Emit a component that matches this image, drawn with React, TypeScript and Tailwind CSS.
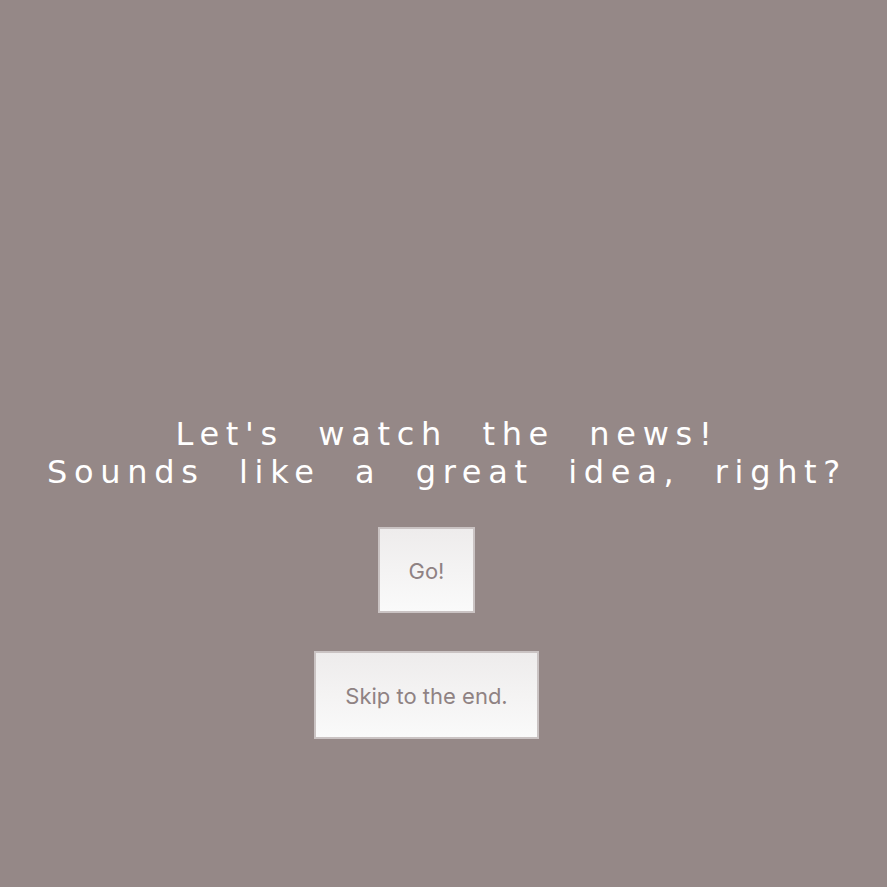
export default function App() {
  return (
    <div className="min-h-[887px] w-full bg-[#958887] flex flex-col items-center pt-[415px]">
      <h1
        className="pl-[7px] text-center text-white text-[32px] leading-[38px] tracking-[6.7px] [word-spacing:17.5px] font-normal"
        style={{ fontFamily: '"DejaVu Sans", Verdana, sans-serif' }}
      >
        Let's watch the news!
        <br />
        Sounds like a great idea, right?
      </h1>
      <div className="mt-[36px] flex flex-col items-center gap-[38px] mr-[34px]">
        <button className="h-[86px] px-[29px] pt-[2px] border-2 border-[#cac3c3] bg-gradient-to-b from-[#eeecec] to-[#fafafa] text-[#8f8283] text-[22px] font-['Inter',sans-serif]">
          Go!
        </button>
        <button className="h-[88px] px-[29px] pt-[3px] border-2 border-[#cac3c3] bg-gradient-to-b from-[#eeecec] to-[#fafafa] text-[#8f8283] text-[22px] font-['Inter',sans-serif]">
          Skip to the end.
        </button>
      </div>
    </div>
  );
}
